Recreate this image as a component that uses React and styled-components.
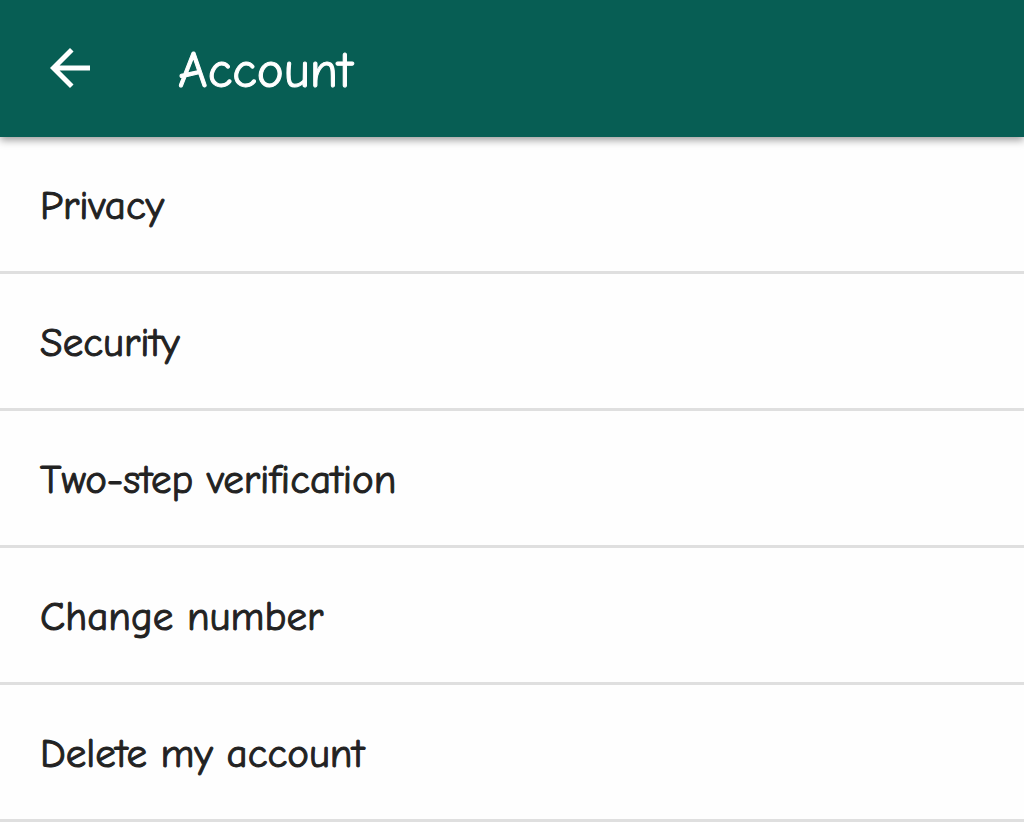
import React from 'react';
import styled, { createGlobalStyle } from 'styled-components';

const GlobalStyle = createGlobalStyle`
    * {
        box-sizing: border-box;
    }

    body {
        margin: 0;
        background-color: #fefefe;
        font-family: 'Comic Neue', Lato, 'Open Sans', sans-serif;
        -webkit-text-stroke: 1px currentColor;
    }
`

const Header = styled.header`
    position: relative;
    display: flex;
    align-items: center;
    gap: 78px;
    height: 137px;
    padding: 0 40px;
    background-color: #075e54;
    color: #fff;
    box-shadow: 0 3px 8px rgba(0, 0, 0, 0.4);
`

const BackButton = styled.button`
    display: flex;
    padding: 0 0 2px;
    border: none;
    background: none;
    color: inherit;
    cursor: pointer;
`

const BackIcon = styled.svg`
    width: 60px;
    height: 60px;
`

const Title = styled.h1`
    margin: 0;
    padding-top: 4px;
    font-size: 51px;
    line-height: 56px;
    font-weight: 400;
`

const List = styled.ul`
    margin: 0;
    padding: 0;
    list-style: none;
`

const Item = styled.li`
    border-bottom: 3px solid #dfdfdf;
`

const ItemLink = styled.a`
    display: block;
    padding: 47px 40px 43px;
    color: #222;
    font-size: 41px;
    line-height: 44px;
    text-decoration: none;
`

const options = [
    'Privacy',
    'Security',
    'Two-step verification',
    'Change number',
    'Delete my account',
]

const App = () => {
    return <>
        <GlobalStyle />
        <Header>
            <BackButton type='button' aria-label='Back'>
                <BackIcon viewBox='0 0 24 24' fill='currentColor'>
                    <path d='M20 11H7.83l5.59-5.59L12 4l-8 8 8 8 1.41-1.41L7.83 13H20v-2z' />
                </BackIcon>
            </BackButton>
            <Title>Account</Title>
        </Header>
        <List>
            {options.map((option) => (
                <Item key={option}>
                    <ItemLink href='#'>{option}</ItemLink>
                </Item>
            ))}
        </List>
    </>
}

export default App;
